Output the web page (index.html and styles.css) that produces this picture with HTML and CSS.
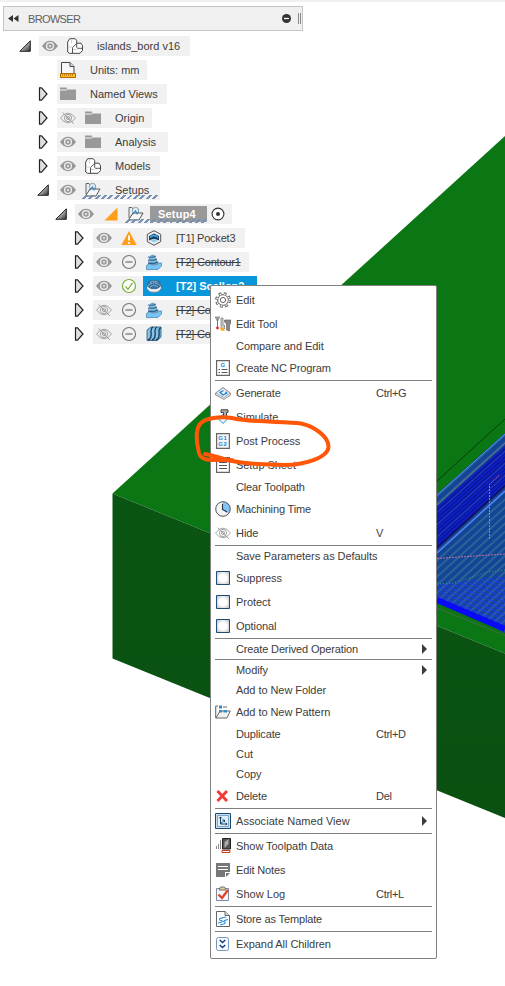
FILE: index.html
```html
<!DOCTYPE html>
<html lang="en">
<head>
<meta charset="utf-8">
<title>Browser</title>
<link rel="stylesheet" href="styles.css">
</head>
<body>
<svg class="defs" aria-hidden="true">
  <linearGradient id="tri" x1="0" y1="0" x2="1" y2="1"><stop offset=".3" stop-color="#ddd"/><stop offset=".9" stop-color="#444"/></linearGradient>
  <radialGradient id="box" r=".7"><stop offset=".4" stop-color="#fff"/><stop offset="1" stop-color="#b4b4b4"/></radialGradient>
  <symbol id="closed" viewBox="0 0 12 16"><path d="M2.500 1.800v12.400h2l5.500-6.200-5.500-6.200z" fill="#e0e0e0" stroke="#222" stroke-width="1.200"/></symbol>
  <symbol id="open" viewBox="0 0 12 12"><path d="M.8 11.300h10.500V.8z" fill="url(#tri)" stroke="#222"/></symbol>
  <symbol id="eye" viewBox="0 0 16 16"><path d="M0 8Q3.500 2.800 8 2.800T16 8q-3.500 5.200-8 5.200T0 8z" fill="#999"/><circle cx="8" cy="8" r="3.400" fill="#999" stroke="#f1f1f1" stroke-width="1.300"/><circle cx="8" cy="8" r="1.200" fill="#ddd"/></symbol>
  <symbol id="hidden" viewBox="0 0 16 16"><g fill="none" stroke="#999" stroke-width=".9"><path d="M.5 8Q4 3.200 8 3.200T15.500 8Q12 12.800 8 12.800T.5 8z"/><circle cx="8" cy="8" r="3.600"/><circle cx="8" cy="8" r="1.500"/><path d="M2.500 2.500l11.500 11.500"/></g></symbol>
  <symbol id="folder" viewBox="0 0 16 16"><path d="M0 1.500h6.500l1 2H16V14H0z" fill="#999"/><path d="M0 4h6.500l1-1" fill="none" stroke="#f1f1f1"/></symbol>
  <symbol id="body" viewBox="0 0 16 16"><g fill="#fff" stroke="#444" stroke-linejoin="round"><path d="M.7 4L2.700.7h5.500l1.500 1.800v3.300l1-.6h3.300l1.500 2.500v4.800L13 15.300H2.500L.7 14z"/><path d="M5.500 15V9.500l4.200-4M9.700 5.500V9.500M9.700 9.500l1 .8h4.500" fill="none" stroke-width=".9"/><path d="M1.200 9h4M4.500 1v4.500M6 11.500h4" stroke="#c8c8c8" stroke-width=".8"/></g></symbol>
  <symbol id="units" viewBox="0 0 16 16"><path d="M1.500 11V.5H10l4 4V11" fill="#f6f6f8" stroke="#445"/><path d="M10 .5v4h4" fill="#ddd" stroke="#445"/><path d="M.5 11.500h15v4H.5z" fill="#ffbd22" stroke="#b56a00"/><path d="M2 13h12" stroke="#85510a" stroke-width="1.200" stroke-dasharray="1 1"/></symbol>
  <symbol id="setup" viewBox="0 0 18 16"><path d="M3 12V1.500h3l1 2h5.500v3" fill="#eee" stroke="#666"/><circle cx="9.500" cy="4.500" r="3.200" fill="#dcecf6" stroke="#7c9ab2" stroke-width=".9"/><path d="M2.500 14l4.500-7h10l-4 7z" fill="#f7f7f7" stroke="#555"/><path d="M6.500 8.500L9.500 5l2 3.500" fill="none" stroke="#2e8ac4" stroke-width="1.100"/></symbol>
  <symbol id="warn" viewBox="0 0 16 16"><path d="M8 1l7.700 14H.3z" fill="#ff9e1b"/><path d="M8 5.500v5M8 12v2" stroke="#fff" stroke-width="1.800"/></symbol>
  <symbol id="minus" viewBox="0 0 16 16"><circle cx="8" cy="8" r="6.500" fill="none" stroke="#777" stroke-width="1.100"/><path d="M4.500 8h7" stroke="#777" stroke-width="1.300"/></symbol>
  <symbol id="check" viewBox="0 0 16 16"><circle cx="8" cy="8" r="6.500" fill="#fff" stroke="#78af35" stroke-width="1.200"/><path d="M4.500 8.300l2.500 3 4.500-6.500" fill="none" stroke="#78af35" stroke-width="1.300"/></symbol>
  <symbol id="pocket" viewBox="0 0 16 16"><path d="M8 .7l6.700 3.600v7.400L8 15.300l-6.700-3.600V4.300z" fill="#eee" stroke="#555"/><path d="M3 10.500V6l5-2.500L13 6v4.500q-5-3-10 0z" fill="#173f65"/><path d="M4 7.500Q8 3.500 12 7.500" fill="none" stroke="#4bb0ed" stroke-width="1.300"/><path d="M4.500 10.800Q8 8 11.500 10.800L8 12.500z" fill="#8fccf3"/></symbol>
  <symbol id="contour" viewBox="0 0 16 16"><path d="M.5 11.500L4 9h11.500v3L12 15.500H.5z" fill="#78c4f5" stroke="#3e80b2" stroke-width=".7"/><path d="M2 10q1-6 2-8Q7-.5 9 2l1 3q2 3 3 5-5 3-11 0z" fill="#6c9dc0"/><path d="M2 3q5 2 8-1M2 6q5 2 9-1M2 9q5 2 10-1" fill="none" stroke="#1c5c8d" stroke-width="1"/><path d="M4 4q3 1 5 0M3 7q4 1 7 0" fill="none" stroke="#a7daf8" stroke-width=".8"/></symbol>
  <symbol id="scallop" viewBox="0 0 16 16"><path d="M1 7v3q1 4.500 7 4.500t7-4.500V7z" fill="#d5dce2" stroke="#56738a" stroke-width=".6"/><ellipse cx="8" cy="6.500" rx="7" ry="4.800" fill="#3c6f9a"/><path d="M2 7.500q6-5 12 0M4 9q4-3 8 0M4 4.500q4-2.500 8 0" fill="none" stroke="#8fcdf5" stroke-width=".9" stroke-dasharray="2 .6"/><path d="M1 9q7 5 14 0v1.500q-7 5-14 0z" fill="#eef1f3"/></symbol>
  <symbol id="flow" viewBox="0 0 16 16"><path d="M1 14.500V4l4-3h10v10l-4 3.500H1z" fill="#86c1e6" stroke="#285374" stroke-width=".8"/><path d="M2 14Q6 13 5 5q0-3 2-4M6 14q4-1 3-9 0-3 2-4M10 14q4-1 3-9 0-3 2-3" fill="none" stroke="#163d5d" stroke-width="1.300"/></symbol>
  <symbol id="gear" viewBox="0 0 16 16"><circle cx="8" cy="8" r="6.400" fill="none" stroke="#666" stroke-width="3" stroke-dasharray="2.700 2.327"/><circle cx="8" cy="8" r="5.300" fill="#fff" stroke="#666" stroke-width="1"/><circle cx="8" cy="8" r="6.100" fill="none" stroke="#fff" stroke-width="1.700" stroke-dasharray="1.200 3.591" stroke-dashoffset="-.7"/><circle cx="8" cy="8" r="2.600" fill="#fff" stroke="#666"/></symbol>
  <symbol id="tool" viewBox="0 0 16 16"><path d="M0 1.500h5M1 3.500h3" stroke="#999" stroke-width="1.800"/><path d="M2.500 4v7" stroke="#777" stroke-width="1"/><circle cx="2.500" cy="12" r="1.400" fill="#e22"/><path d="M6 2v11h3.500V9H8V2z" fill="#ccc" stroke="#777" stroke-width=".7"/><path d="M9.500 4H16v3l-1.500 2v6l-3-1V8l-2-2z" fill="#888" stroke="#555" stroke-width=".6"/><path d="M5 13.500l3-2 2 3-3 .5z" fill="#ffae18"/></symbol>
  <symbol id="generate" viewBox="0 0 16 16"><path d="M.5 8L8 2.500l7.500 5.500v2L9 14.500.5 10z" fill="#ddd" stroke="#777" stroke-width=".7"/><path d="M1 8l7-5 7 5-6 4.500z" fill="#eef4f8" stroke="#888" stroke-width=".6"/><path d="M8.500 5.500L5 7.300 8 10l3.800-2-1.500-1.300" fill="none" stroke="#1686e0" stroke-width="1.300"/></symbol>
  <symbol id="simulate" viewBox="0 0 16 16"><path d="M3 9.500l5-4 5 4-5 5z" fill="#eaf6ff" stroke="#2989d0"/><path d="M6 .8h7v2.700h-1.500V8.500h-3v-5H6z" fill="#aaa" stroke="#444"/></symbol>
  <symbol id="sheet" viewBox="0 0 16 16"><path d="M1.600.6h12.800v14.800H1.600z" fill="#fff" stroke="#666" stroke-width="1.200"/><path d="M4 5.500h8M4 8.500h8M4 11.500h8" stroke="#555"/></symbol>
  <symbol id="time" viewBox="0 0 16 16"><circle cx="8" cy="8" r="7.300" fill="#f3f3f3"/><path d="M7.500 8.500V1A7 7 0 0 1 13.500 12.500z" fill="#82c4f6"/><circle cx="8" cy="8" r="7.300" fill="none" stroke="#555"/><path d="M7.500 3v5.500L12 11" fill="none" stroke="#234" stroke-width="1.100"/></symbol>
  <symbol id="checkbox" viewBox="0 0 16 16"><path d="M1.500 1.500h13v13h-13z" fill="url(#box)" stroke="#1c4e7a"/></symbol>
  <symbol id="pattern" viewBox="0 0 16 16"><path d="M3 2H.7v12H12l3.300-7H5L1 14" fill="#f1f1f1" stroke="#666"/><path d="M4 1.500h3v3H4zM4 6h3v2.500H4zM8.500 6H12v2.500H8.500z" fill="#348bc5"/><path d="M8 3h4" stroke="#666"/></symbol>
  <symbol id="delete" viewBox="0 0 16 16"><path d="M3.500 4l7.500 8M11 4l-7.500 8" stroke="#f03a36" stroke-width="2.900" stroke-linecap="square"/></symbol>
  <symbol id="view" viewBox="0 0 16 16"><path d="M.5.500h15v15H.500z" fill="#c9dfee" stroke="#164978"/><path d="M2.500 2.500h11v11h-11z" fill="#e3eff8" stroke="#6b94b5" stroke-width=".8"/><path d="M5.500 3.800V11h6.700M5.500 4L4.300 5.300M5.500 4l1.200 1.300M12 11l-1.300-1.200M12 11l-1.300 1.200M5.500 11l4-4M7.500 7h2v2" fill="none" stroke="#123d67"/></symbol>
  <symbol id="data" viewBox="0 0 16 16"><path d="M1.500 11V8m2 3V6m2 5V2" stroke="#888"/><path d="M7.500.5h8V11h-8z" fill="#555" stroke="#222"/><path d="M9.500 10V4l4-3v5z" fill="#aaa"/><path d="M7 12.500h8v2H7z" fill="#fff" stroke="#c43c18"/></symbol>
  <symbol id="notes" viewBox="0 0 16 16"><path d="M1 1h14v9h-5v5H1z" fill="#777"/><path d="M3 4.500h10M3 7.500h10" stroke="#fff"/><path d="M11 11h4l-4 4z" fill="#777"/></symbol>
  <symbol id="log" viewBox="0 0 16 16"><path d="M1.500 2.500h12v12h-12z" fill="#f3f5fb" stroke="#8088a0"/><path d="M4 4l1.500-3h4L11 4z" fill="#e6d098" stroke="#77736b"/><path d="M3.500 8.500L7 12l6-8" fill="none" stroke="#df4427" stroke-width="2.300"/></symbol>
  <symbol id="template" viewBox="0 0 16 16"><path d="M1.500.5H10l4.500 4v11h-13z" fill="#fff" stroke="#666"/><path d="M10 .5v4h4.500" fill="#ddd" stroke="#666"/><path d="M11 6L5.500 7.300q-2 1-.3 2l4 1.400q2 1 0 2L5 14M13 8.500L9 9.600M3 12l4-1" fill="none" stroke="#2f91d9" stroke-width="1.200"/></symbol>
  <symbol id="expand" viewBox="0 0 16 16"><rect x="1.500" y="1.500" width="12" height="13" rx="2" fill="#f7fbff" stroke="#7595b5"/><path d="M4.700 4l2.800 2.600L10.300 4M4.700 9l2.800 2.600L10.300 9" fill="none" stroke="#17417d" stroke-width="1.500"/></symbol>
</svg>

<svg class="scene" width="505" height="986" viewBox="0 0 505 986" aria-hidden="true">
  <defs>
    <linearGradient id="side" x1="0" y1="0" x2="0" y2="1"><stop stop-color="#0b5514"/><stop offset="1" stop-color="#095011"/></linearGradient>
    <pattern id="rise" width="40" height="12" patternUnits="userSpaceOnUse" patternTransform="rotate(-42)">
      <path d="M0 1h40M0 7h40" stroke="#4f86ff" stroke-width="1.100"/>
      <path d="M0 3h40M0 5h40M0 9h40M0 11h40" stroke="#2448ff" stroke-width="1.100"/>
    </pattern>
    <pattern id="deep" width="40" height="9" patternUnits="userSpaceOnUse" patternTransform="rotate(-42)">
      <path d="M0 1h40M0 4h40" stroke="#1024d8" stroke-width="1.300"/><path d="M0 7.200h40" stroke="#2b50f0"/>
    </pattern>
    <pattern id="fall" width="30" height="4" patternUnits="userSpaceOnUse" patternTransform="rotate(23)">
      <path d="M0 1h30" stroke="#1c38f8" stroke-width="1.200"/>
    </pattern>
  </defs>
  <path d="M112.500 493.500L505 136v517.500z" fill="#0a7614"/>
  <path d="M112.500 493.500L505 653.500V818L112.500 658.500z" fill="url(#side)"/>
  <path d="M437 481l68-62" stroke="#07400b"/>
  <path d="M437 494l68-61v200l-68-35z" fill="#05402c"/>
  <path d="M437 494l68-61v200l-68-35z" fill="url(#rise)"/>
  <path d="M437 507l68-61v40l-68 63z" fill="#07128c"/>
  <path d="M437 507l68-61v40l-68 63z" fill="url(#deep)"/>
  <path d="M437 584l68-8v57l-68-35z" fill="url(#fall)"/>
  <path d="M437 548l68-62" stroke="#141258" stroke-width="1.500"/>
  <path d="M437 553l68-62" stroke="#4f86ff" stroke-width="1.300"/>
  <path d="M437 505l68-62" stroke="#66708e"/>
  <path d="M437 495l68-61" stroke="#4f8cff"/>
  <path d="M437 600l68 29" stroke="#0a0af8" stroke-width="6"/>
  <path d="M437 608l68 27.500" stroke="#496948"/>
  <g fill="none" stroke-dasharray="2 1"><path d="M437 558.500l68-4.500M489.500 539v-55l10-9" stroke="#bd7597"/><path d="M437 584l17-1 34-11 17-2" stroke="#28a67d" stroke-dasharray="1 2"/></g>
</svg>

<main class="browser">
  <header class="bar">
    <svg width="11" height="7" viewBox="0 0 11 7"><path d="M5 0v7L0 3.500zM10.500 0v7l-5-3.500z" fill="#333"/></svg>
    <span class="title">BROWSER</span>
    <svg width="9" height="9" viewBox="0 0 9 9"><circle cx="4.500" cy="4.500" r="4.500" fill="#333"/><path d="M2 4.500h5" stroke="#fff" stroke-width="1.300"/></svg>
    <i class="grip"></i>
  </header>
  <div class="tree">
    <div class="node l0"><svg class="tw open"><use href="#open"/></svg><div class="cell w151"><svg><use href="#eye"/></svg><svg><use href="#body"/></svg><span>islands_bord v16</span></div></div>
    <div class="node l1"><i class="tw"></i><div class="cell w90"><svg><use href="#units"/></svg><span>Units: mm</span></div></div>
    <div class="node l1"><svg class="tw"><use href="#closed"/></svg><div class="cell w110"><svg><use href="#folder"/></svg><span>Named Views</span></div></div>
    <div class="node l1"><svg class="tw"><use href="#closed"/></svg><div class="cell w95"><svg><use href="#hidden"/></svg><svg><use href="#folder"/></svg><span>Origin</span></div></div>
    <div class="node l1"><svg class="tw"><use href="#closed"/></svg><div class="cell w111"><svg><use href="#eye"/></svg><svg><use href="#folder"/></svg><span>Analysis</span></div></div>
    <div class="node l1"><svg class="tw"><use href="#closed"/></svg><div class="cell w103"><svg><use href="#eye"/></svg><svg><use href="#body"/></svg><span>Models</span></div></div>
    <div class="node l1"><svg class="tw open"><use href="#open"/></svg><div class="cell w103 hatch"><svg><use href="#eye"/></svg><svg class="wide"><use href="#setup"/></svg><span>Setups</span></div></div>
    <div class="node l2"><svg class="tw open"><use href="#open"/></svg><div class="cell w157 hatch setup"><svg><use href="#eye"/></svg><svg viewBox="0 0 16 16"><path d="M1.500 14.500h13v-13z" fill="#ff9e1b"/></svg><svg class="wide"><use href="#setup"/></svg><b>Setup4</b><svg class="radio" viewBox="0 0 14 14"><circle cx="7" cy="7" r="5.900" fill="#fff" stroke="#333" stroke-width="1.100"/><circle cx="7" cy="7" r="2" fill="#333"/></svg></div></div>
    <div class="node l3"><svg class="tw"><use href="#closed"/></svg><div class="cell w152"><svg><use href="#eye"/></svg><svg><use href="#warn"/></svg><svg><use href="#pocket"/></svg><span>[T1] Pocket3</span></div></div>
    <div class="node l3"><svg class="tw"><use href="#closed"/></svg><div class="cell w156"><svg><use href="#eye"/></svg><svg><use href="#minus"/></svg><svg><use href="#contour"/></svg><s>[T2] Contour1</s></div></div>
    <div class="node l3"><svg class="tw"><use href="#closed"/></svg><div class="cell w164 selected"><svg><use href="#eye"/></svg><svg><use href="#check"/></svg><svg><use href="#scallop"/></svg><b>[T2] Scallop2</b></div></div>
    <div class="node l3"><svg class="tw"><use href="#closed"/></svg><div class="cell w156"><svg><use href="#hidden"/></svg><svg><use href="#minus"/></svg><svg><use href="#contour"/></svg><s>[T2] Contour2</s></div></div>
    <div class="node l3"><svg class="tw"><use href="#closed"/></svg><div class="cell w156"><svg><use href="#hidden"/></svg><svg><use href="#minus"/></svg><svg><use href="#flow"/></svg><s>[T2] Contour3</s></div></div>
  </div>
</main>

<nav class="menu">
  <div class="item"><svg><use href="#gear"/></svg><span>Edit</span></div>
  <div class="item"><svg><use href="#tool"/></svg><span>Edit Tool</span></div>
  <div class="item plain"><span>Compare and Edit</span></div>
  <div class="item"><svg viewBox="0 0 16 16"><path d="M1.600.6h12.800v14.800H1.600z" fill="#fff" stroke="#666" stroke-width="1.200"/><text x="5.500" y="6.500" class="glyph">G</text><path d="M3.500 9.500h1.500m1.500 0h6M3.500 12.500h1.500m1.500 0h6" stroke="#555" stroke-width="1.200"/></svg><span class="snug">Create NC Program</span></div>
  <hr>
  <div class="item"><svg><use href="#generate"/></svg><span class="snug">Generate</span><kbd>Ctrl+G</kbd></div>
  <div class="item"><svg><use href="#simulate"/></svg><span>Simulate</span></div>
  <div class="item"><svg viewBox="0 0 16 16"><path d="M1.600.6h12.800v14.800H1.600z" fill="#f5f5f5" stroke="#666" stroke-width="1.200"/><text x="3.300" y="7" class="glyph">G1</text><text x="3.300" y="13.300" class="glyph">G2</text></svg><span>Post Process</span></div>
  <div class="item"><svg><use href="#sheet"/></svg><span>Setup Sheet</span></div>
  <div class="item plain"><span class="snug">Clear Toolpath</span></div>
  <div class="item"><svg><use href="#time"/></svg><span class="snug">Machining Time</span></div>
  <div class="item"><svg><use href="#hidden"/></svg><span>Hide</span><kbd>V</kbd></div>
  <hr>
  <div class="item plain"><span>Save Parameters as Defaults</span></div>
  <div class="item"><svg><use href="#checkbox"/></svg><span>Suppress</span></div>
  <div class="item"><svg><use href="#checkbox"/></svg><span>Protect</span></div>
  <div class="item"><svg><use href="#checkbox"/></svg><span>Optional</span></div>
  <hr>
  <div class="item plain"><span class="snug">Create Derived Operation</span><i class="more"></i></div>
  <hr>
  <div class="item plain"><span>Modify</span><i class="more"></i></div>
  <div class="item plain"><span>Add to New Folder</span></div>
  <div class="item"><svg><use href="#pattern"/></svg><span>Add to New Pattern</span></div>
  <div class="item plain"><span class="snug">Duplicate</span><kbd>Ctrl+D</kbd></div>
  <div class="item plain"><span>Cut</span></div>
  <div class="item plain"><span>Copy</span></div>
  <div class="item"><svg><use href="#delete"/></svg><span class="snug">Delete</span><kbd>Del</kbd></div>
  <hr>
  <div class="item"><svg><use href="#view"/></svg><span class="loose">Associate Named View</span><i class="more"></i></div>
  <hr>
  <div class="item"><svg><use href="#data"/></svg><span>Show Toolpath Data</span></div>
  <div class="item"><svg><use href="#notes"/></svg><span class="snug">Edit Notes</span></div>
  <div class="item"><svg><use href="#log"/></svg><span class="loose">Show Log</span><kbd>Ctrl+L</kbd></div>
  <hr>
  <div class="item"><svg><use href="#template"/></svg><span class="snug">Store as Template</span></div>
  <hr>
  <div class="item"><svg><use href="#expand"/></svg><span>Expand All Children</span></div>
</nav>

<svg class="mark" width="505" height="986" viewBox="0 0 505 986" aria-hidden="true"><path d="M205 454C216 456 222 459 232 461C248 464 266 465 285 465C303 465 328 458 328.500 447C329 436 313 426 301 423.500C284 421 254 423 232 418C220 416 205 418 200 424C195 431 197 445 199 453C201 460 208 460 217 460L232 460" fill="none" stroke="#ff5608" stroke-width="4" stroke-linecap="round" stroke-linejoin="round"/></svg>
</body>
</html>
```
FILE: styles.css
```css
* { box-sizing: border-box; }
body {
  margin: 0;
  height: 986px;
  overflow: hidden;
  position: relative;
  background: #fff;
  color: #3c3c3c;
  font: 11px/20px "Liberation Sans", Arial, sans-serif;
  letter-spacing: 0;
}
svg { display: block; flex: none; }
.defs { position: absolute; width: 0; height: 0; }
.scene, .mark { position: absolute; left: 0; top: 0; }
.mark { pointer-events: none; }
.glyph { font: bold 6px "Liberation Sans", sans-serif; letter-spacing: .5px; fill: #1686d4; }

.browser { position: relative; border-top: 2px solid #f0f0f0; padding-top: 4px; }
.bar {
  display: flex;
  align-items: center;
  width: 300px;
  height: 25px;
  margin-left: 3px;
  padding: 0 1px 0 4px;
  background: #f0f0f0;
  border: 1px solid #c5c5c5;
}
.title { flex: 1; margin-left: 9px; color: #606060; letter-spacing: -.65px; }
.grip { width: 3px; height: 11px; margin-left: 7px; border: solid #888; border-width: 0 1px; }

.tree { padding-top: 3px; }
.node { display: flex; align-items: center; height: 24px; }
.l0 { padding-left: 19px; }
.l1 { padding-left: 37px; }
.l2 { padding-left: 55px; }
.l3 { padding-left: 73px; letter-spacing: -.2px; }
.tw { width: 12px; height: 16px; margin-right: 8px; }
.tw.open { height: 12px; }
.cell { display: flex; align-items: center; gap: 9px; height: 20px; padding-left: 3px; background: #f1f1f1; white-space: nowrap; position: relative; }
.cell svg { width: 16px; height: 16px; }
.cell span, .cell s, .cell b { margin-left: 5px; }
.cell svg.wide { width: 18px; margin-left: -2px; }
.w90 { width: 90px; }
.w95 { width: 95px; }
.w103 { width: 103px; }
.w110 { width: 110px; }
.w111 { width: 111px; }
.w151 { width: 151px; }
.w152 { width: 152px; }
.w156 { width: 156px; }
.w157 { width: 157px; }
.w164 { width: 164px; }
.hatch::after {
  content: "";
  position: absolute;
  left: 25px;
  right: 2px;
  bottom: 1px;
  height: 4px;
  background: repeating-linear-gradient(135deg, transparent 0 2.500px, #7990b5 2.500px 4.500px);
}
.setup::after { left: 50px; right: 25px; }
.setup b { margin: 0 0 0 -3px; width: 57px; height: 16px; padding-left: 8px; line-height: 16px; color: #fff; background: #999; letter-spacing: .2px; }
.setup .radio { width: 14px; height: 14px; margin-left: -5px; }
.selected { background: linear-gradient(90deg, #f1f1f1 50px, #0a96db 50px); }
.selected b { color: #fff; letter-spacing: 0; }

.menu {
  position: absolute;
  left: 210px;
  top: 285px;
  width: 227px;
  height: 674px;
  padding: 2px 4px;
  background: #fff;
  border: 1px solid #808080;
  border-radius: 2px;
  letter-spacing: -.06px;
}
.item { display: flex; align-items: center; height: 24px; position: relative; }
.item svg { width: 16px; height: 16px; margin-right: 5px; }
.item span { width: 140px; white-space: nowrap; }
.item .snug { letter-spacing: -.14px; }
.item .loose { letter-spacing: .04px; }
.plain { height: 20px; padding-left: 21px; }
kbd { font: inherit; letter-spacing: -.3px; }
hr { height: 1px; margin: 0; border: 0; background: #808080; }
.more { margin-left: auto; margin-right: 5px; border-left: 5px solid #3c3c3c; border-top: 5px solid transparent; border-bottom: 5px solid transparent; }
```
